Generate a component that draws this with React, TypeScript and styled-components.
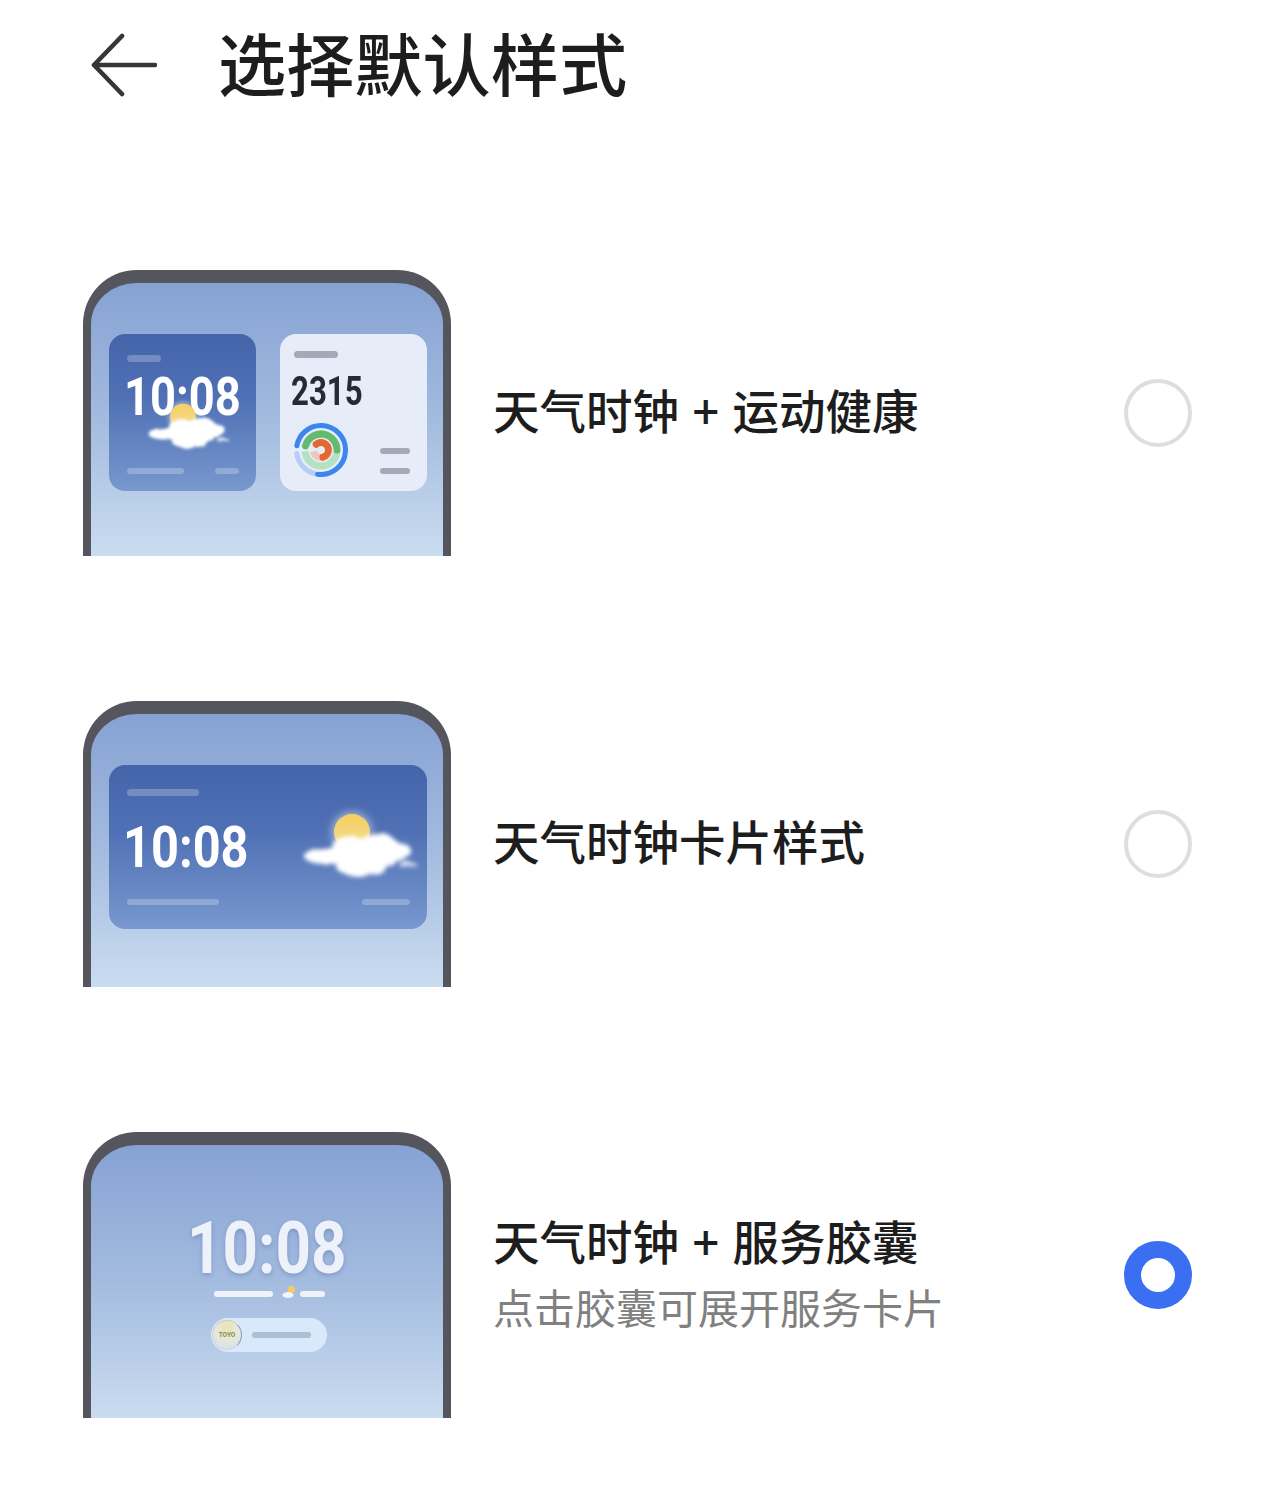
import React from "react";
import styled, { createGlobalStyle } from "styled-components";

const GlobalStyle = createGlobalStyle`
  html, body {
    margin: 0;
    padding: 0;
    background: #fff;
    font-family: "Noto Sans CJK SC", "Liberation Sans", sans-serif;
  }
`;

const Page = styled.div`
  width: 1280px;
  height: 1507px;
  box-sizing: border-box;
  padding: 0 88px 0 83px;
  overflow: hidden;
`;

const Header = styled.header`
  display: flex;
  align-items: center;
  height: 130px;
  padding-left: 8px;
  margin-bottom: 140px;
`;

const BackIcon = styled.svg`
  width: 66px;
  height: 64px;
  flex: none;
  margin-right: 61px;
`;

const Title = styled.h1`
  margin: 0 0 7px;
  font-size: 68.2px;
  line-height: 80px;
  font-weight: 500;
  color: #1d1d1d;
`;

const OptionList = styled.div`
  display: flex;
  flex-direction: column;
  gap: 145px;
`;

const Option = styled.div`
  display: flex;
  align-items: center;
  height: 286px;
`;

const Phone = styled.div<{ $center?: boolean }>`
  width: 368px;
  height: 286px;
  flex: none;
  box-sizing: border-box;
  border: solid #54555d;
  border-width: 13px 8px 0;
  border-radius: 54px 54px 0 0;
  background: linear-gradient(180deg, #86a2d3 0%, #a3bbdf 50%, #cadcef 100%);
  padding: ${(p) => (p.$center ? "0" : "51px 16px 0 18px")};
  display: flex;
  ${(p) => (p.$center ? "flex-direction: column; align-items: center;" : "gap: 24px;")}
`;

const WeatherCard = styled.div<{ $wide?: boolean }>`
  position: relative;
  width: ${(p) => (p.$wide ? "318px" : "147px")};
  height: ${(p) => (p.$wide ? "164px" : "157px")};
  box-sizing: border-box;
  padding: ${(p) => (p.$wide ? "24px 17px 24px 18px" : "21px 17px 17px 18px")};
  border-radius: 16px;
  background: linear-gradient(180deg, #4465aa 0%, #4f70b4 40%, #7898cf 100%);
  display: flex;
  flex-direction: column;
`;

const HealthCard = styled.div`
  width: 147px;
  height: 157px;
  box-sizing: border-box;
  padding: 17px 17px 14px 11px;
  border-radius: 16px;
  background: #e6edf8;
  display: flex;
  flex-direction: column;
`;

const Bar = styled.div<{ $w: number; $tone?: "soft" | "grey" | "white" | "pill"; $indent?: number }>`
  width: ${(p) => p.$w}px;
  height: 6.5px;
  flex: none;
  margin-left: ${(p) => p.$indent ?? 0}px;
  border-radius: 4px;
  background: ${(p) =>
    p.$tone === "grey"
      ? "#a3a9b6"
      : p.$tone === "white"
        ? "#eef3fb"
        : p.$tone === "pill"
          ? "#abc0d3"
          : "rgba(255, 255, 255, 0.24)"};
`;

const Digits = styled.div<{ $size: number; $scale: number; $top?: number; $left?: number; $dark?: boolean; $glow?: boolean }>`
  font-family: Roboto, "Liberation Sans", sans-serif;
  font-weight: 700;
  font-size: ${(p) => p.$size}px;
  line-height: ${(p) => Math.round(p.$size)}px;
  margin-top: ${(p) => p.$top ?? 0}px;
  margin-left: ${(p) => p.$left ?? 0}px;
  color: ${(p) => (p.$dark ? "#252a33" : p.$glow ? "#edf2fa" : "#fff")};
  white-space: nowrap;
  transform: scaleX(${(p) => p.$scale});
  transform-origin: ${(p) => (p.$glow ? "center" : "left")};
  ${(p) => p.$glow && "text-shadow: 0 2px 5px rgba(70, 95, 150, 0.35);"}
`;

const CardFoot = styled.div`
  margin-top: auto;
  display: flex;
  justify-content: space-between;
`;

const CardMiddle = styled.div`
  flex: 1;
  display: flex;
  align-items: center;
  justify-content: space-between;
  margin-right: -8px;
`;

const CloudOverlay = styled.div`
  position: absolute;
  left: 39px;
  top: 69px;
  line-height: 0;
`;

const HealthFoot = styled.div`
  margin-top: auto;
  padding-left: 3px;
  display: flex;
  align-items: flex-end;
  justify-content: space-between;
`;

const BarStack = styled.div`
  display: flex;
  flex-direction: column;
  gap: 13.5px;
  padding-bottom: 3px;
`;

const LockInfo = styled.div`
  display: flex;
  align-items: center;
  margin: 1px 0 0 4px;
  height: 16px;
`;

const MiniIcon = styled.svg`
  flex: none;
  margin: -5px 2px 0 9px;
`;

const Capsule = styled.div`
  margin: 16px 0 0 4px;
  width: 116px;
  height: 34px;
  box-sizing: border-box;
  padding-left: 1px;
  border-radius: 17px;
  background: #d8e9fb;
  display: flex;
  align-items: center;
  gap: 10px;
`;

const CapsuleBadge = styled.div`
  width: 30px;
  height: 30px;
  border-radius: 50%;
  box-sizing: border-box;
  border: 1.5px solid #c9d3dc;
  border-top-color: #d9cd93;
  border-right-color: #8d97a6;
  background: radial-gradient(circle at 50% 25%, #e9e3b8 0%, #e6e8dc 45%, #d2dfee 100%);
  display: flex;
  align-items: center;
  justify-content: center;
  font-family: Roboto, sans-serif;
  font-size: 6.5px;
  font-weight: 700;
  color: #8d8a4a;
`;

const OptionText = styled.div`
  flex: 1;
  margin-left: 42px;
`;

const Label = styled.div<{ $solo?: boolean }>`
  font-size: 46.5px;
  line-height: 62px;
  font-weight: 500;
  color: #1d1d1d;
  word-spacing: 3px;
  margin-bottom: ${(p) => (p.$solo ? "8px" : "0")};
`;

const SubLabel = styled.div`
  margin-top: 6px;
  margin-bottom: 7px;
  font-size: 41px;
  line-height: 58px;
  font-weight: 400;
  color: #808080;
`;

const Radio = styled.div<{ $checked?: boolean }>`
  width: 68px;
  height: 68px;
  flex: none;
  box-sizing: border-box;
  border-radius: 50%;
  background: #fff;
  border: ${(p) => (p.$checked ? "17px solid #3b6ff2" : "4px solid #dedede")};
`;

function WeatherIcon({ width }: { width: number }) {
  return (
    <svg width={width} height={width * 0.583} viewBox="0 0 115 67" style={{ overflow: "visible" }}>
      <defs>
        <linearGradient id="sunFill" x1="0" y1="0" x2="0" y2="1">
          <stop offset="0" stopColor="#f6cf63" />
          <stop offset="1" stopColor="#f3dc93" />
        </linearGradient>
        <filter id="fluff" x="-15%" y="-25%" width="130%" height="150%">
          <feTurbulence type="fractalNoise" baseFrequency="0.07" numOctaves="2" seed="4" />
          <feDisplacementMap in="SourceGraphic" scale="6" />
          <feGaussianBlur stdDeviation="2" />
        </filter>
        <filter id="halo" x="-50%" y="-50%" width="200%" height="200%">
          <feGaussianBlur stdDeviation="4" />
        </filter>
      </defs>
      <circle cx="49" cy="19" r="20" fill="#fff" opacity="0.5" filter="url(#halo)" />
      <circle cx="49" cy="19" r="18" fill="url(#sunFill)" />
      <g fill="#fff" filter="url(#fluff)">
        <ellipse cx="21" cy="43" rx="20" ry="8" />
        <ellipse cx="50" cy="38" rx="22" ry="14" />
        <ellipse cx="75" cy="38" rx="23" ry="17" />
        <ellipse cx="58" cy="52" rx="26" ry="11" />
        <ellipse cx="95" cy="39" rx="14" ry="9" />
        <ellipse cx="105" cy="52" rx="9" ry="2.4" opacity="0.8" />
      </g>
    </svg>
  );
}

function MiniWeather() {
  return (
    <MiniIcon width="16" height="14" viewBox="0 0 16 14">
      <circle cx="9.5" cy="4.5" r="3.6" fill="#f4cd62" />
      <ellipse cx="6" cy="10" rx="5.6" ry="3" fill="#f2f5fb" />
    </MiniIcon>
  );
}

function arc(r: number, from: number, to: number) {
  const pt = (deg: number) => {
    const a = ((deg - 90) * Math.PI) / 180;
    return `${(27 + r * Math.cos(a)).toFixed(2)} ${(27 + r * Math.sin(a)).toFixed(2)}`;
  };
  const large = to - from > 180 ? 1 : 0;
  return `M${pt(from)} A${r} ${r} 0 ${large} 1 ${pt(to)}`;
}

function ActivityRing() {
  return (
    <svg width="54" height="54" viewBox="0 0 54 54" fill="none" strokeLinecap="round">
      <path d={arc(24.5, 195, 262)} stroke="#b4cef6" strokeWidth="5" />
      <path d={arc(24.5, 280, 360)} stroke="#3c86ee" strokeWidth="5" />
      <path d={arc(24.5, 0, 188)} stroke="#3c86ee" strokeWidth="5" />
      <path d={arc(16, 95, 265)} stroke="#b5e0c2" strokeWidth="7" strokeLinecap="butt" />
      <path d={arc(16, 285, 360)} stroke="#63bb6f" strokeWidth="7" />
      <path d={arc(16, 0, 90)} stroke="#63bb6f" strokeWidth="7" />
      <path d={arc(7.5, 170, 260)} stroke="#edc6c0" strokeWidth="7" strokeLinecap="butt" />
      <path d={arc(7.5, 320, 360)} stroke="#e4672f" strokeWidth="7" />
      <path d={arc(7.5, 0, 165)} stroke="#e4672f" strokeWidth="7" />
    </svg>
  );
}

export default function App() {
  return (
    <Page>
      <GlobalStyle />
      <Header>
        <BackIcon viewBox="0 0 66 64" fill="none" stroke="#363636" strokeWidth="4.6" strokeLinecap="round" strokeLinejoin="round">
          <path d="M64 32H3M31 3L3 32l28 29" />
        </BackIcon>
        <Title>选择默认样式</Title>
      </Header>
      <OptionList>
        <Option>
          <Phone>
            <WeatherCard>
              <Bar $w={34} />
              <Digits $size={54} $scale={0.84} $top={8} $left={-3}>10:08</Digits>
              <CloudOverlay>
                <WeatherIcon width={82} />
              </CloudOverlay>
              <CardFoot>
                <Bar $w={57} />
                <Bar $w={24} />
              </CardFoot>
            </WeatherCard>
            <HealthCard>
              <Bar $w={44} $tone="grey" $indent={3} />
              <Digits $size={40} $scale={0.78} $dark $top={14}>2315</Digits>
              <HealthFoot>
                <ActivityRing />
                <BarStack>
                  <Bar $w={30} $tone="grey" />
                  <Bar $w={30} $tone="grey" />
                </BarStack>
              </HealthFoot>
            </HealthCard>
          </Phone>
          <OptionText>
            <Label $solo>天气时钟 + 运动健康</Label>
          </OptionText>
          <Radio />
        </Option>
        <Option>
          <Phone>
            <WeatherCard $wide>
              <Bar $w={72} />
              <CardMiddle>
                <Digits $size={58} $scale={0.84} $left={-4}>10:08</Digits>
                <WeatherIcon width={115} />
              </CardMiddle>
              <CardFoot>
                <Bar $w={92} />
                <Bar $w={48} />
              </CardFoot>
            </WeatherCard>
          </Phone>
          <OptionText>
            <Label $solo>天气时钟卡片样式</Label>
          </OptionText>
          <Radio />
        </Option>
        <Option>
          <Phone $center>
            <Digits $size={72} $scale={0.86} $glow $top={68}>10:08</Digits>
            <LockInfo>
              <Bar $w={59} $tone="white" />
              <MiniWeather />
              <Bar $w={25} $tone="white" />
            </LockInfo>
            <Capsule>
              <CapsuleBadge>TOYO</CapsuleBadge>
              <Bar $w={59} $tone="pill" />
            </Capsule>
          </Phone>
          <OptionText>
            <Label>天气时钟 + 服务胶囊</Label>
            <SubLabel>点击胶囊可展开服务卡片</SubLabel>
          </OptionText>
          <Radio $checked />
        </Option>
      </OptionList>
    </Page>
  );
}
